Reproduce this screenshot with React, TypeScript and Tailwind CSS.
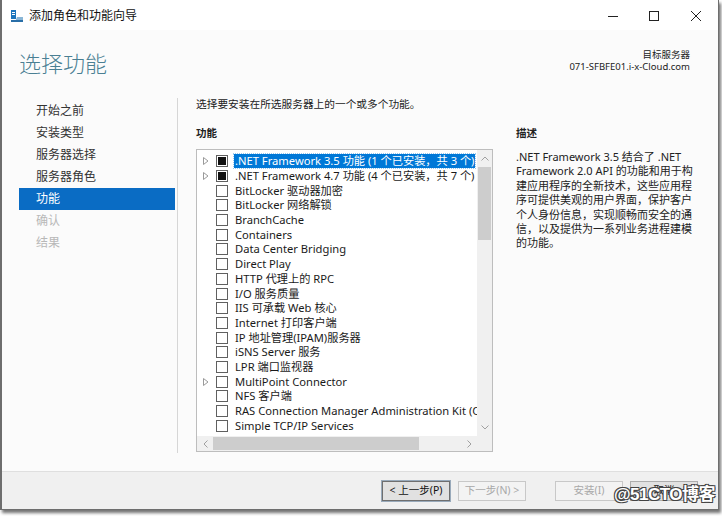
import React from "react";

const items: { text: string; arrow?: boolean; partial?: boolean; selected?: boolean }[] = [
  { text: ".NET Framework 3.5 功能 (1 个已安装，共 3 个)", arrow: true, partial: true, selected: true },
  { text: ".NET Framework 4.7 功能 (4 个已安装，共 7 个)", arrow: true, partial: true },
  { text: "BitLocker 驱动器加密" },
  { text: "BitLocker 网络解锁" },
  { text: "BranchCache" },
  { text: "Containers" },
  { text: "Data Center Bridging" },
  { text: "Direct Play" },
  { text: "HTTP 代理上的 RPC" },
  { text: "I/O 服务质量" },
  { text: "IIS 可承载 Web 核心" },
  { text: "Internet 打印客户端" },
  { text: "IP 地址管理(IPAM)服务器" },
  { text: "iSNS Server 服务" },
  { text: "LPR 端口监视器" },
  { text: "MultiPoint Connector", arrow: true },
  { text: "NFS 客户端" },
  { text: "RAS Connection Manager Administration Kit (CMAK)" },
  { text: "Simple TCP/IP Services" },
];

const nav = [
  { t: "开始之前" },
  { t: "安装类型" },
  { t: "服务器选择" },
  { t: "服务器角色" },
  { t: "功能", sel: true },
  { t: "确认", dis: true },
  { t: "结果", dis: true },
];

const descLines = [
  ".NET Framework 3.5 结合了 .NET",
  "Framework 2.0 API 的功能和用于构",
  "建应用程序的全新技术，这些应用程",
  "序可提供美观的用户界面，保护客户",
  "个人身份信息，实现顺畅而安全的通",
  "信，以及提供为一系列业务进程建模",
  "的功能。",
];

const font = { fontFamily: '"Noto Sans", "Noto Sans CJK SC", sans-serif' };

function Arrow() {
  return (
    <svg width="6" height="8" viewBox="0 0 6 8" className="shrink-0">
      <path d="M0.5 0.5 L5 4 L0.5 7.5 Z" fill="none" stroke="#9a9a9a" strokeWidth="1" />
    </svg>
  );
}

export default function App() {
  return (
    <div className="w-[722px] h-[516px] bg-white relative overflow-hidden" style={font}>
      <div className="w-[719px] h-[510px] bg-[#fbfbfb] border-l-2 border-r border-b border-[#6e6e6e] shadow-[2px_3px_3px_rgba(0,0,0,0.55)] flex flex-col">
        {/* Title bar */}
        <div className="h-[30px] bg-white flex items-center shrink-0 pt-[1px]">
          <svg width="14" height="14" viewBox="0 0 14 14" className="ml-[8px]">
            <rect x="1" y="1" width="5" height="9" fill="#1c75bc" />
            <rect x="2" y="3" width="3" height="1" fill="#fff" />
            <rect x="2" y="5" width="3" height="1" fill="#fff" />
            <path d="M5 13 L7 8 L13 8 L13 13 Z" fill="#8ab6d6" />
            <rect x="1" y="11" width="12" height="2" fill="#2a6fa8" />
          </svg>
          <span className="ml-[5px] text-[12px] text-[#111]">添加角色和功能向导</span>
          <div className="flex-1" />
          <svg width="12" height="12" viewBox="0 0 12 12" className="mr-[29px]">
            <path d="M1 6.5 H11" stroke="#222" strokeWidth="1" />
          </svg>
          <svg width="12" height="12" viewBox="0 0 12 12" className="mr-[30px]">
            <rect x="1.5" y="1.5" width="9" height="9" fill="none" stroke="#222" strokeWidth="1" />
          </svg>
          <svg width="12" height="12" viewBox="0 0 12 12" className="mr-[16px]">
            <path d="M1 1 L11 11 M11 1 L1 11" stroke="#222" strokeWidth="1" />
          </svg>
        </div>

        {/* Header */}
        <div className="h-[66px] flex shrink-0">
          <div className="pl-[17px] pt-[18px] text-[22px] leading-[30px] text-[#4a7f93] font-light">选择功能</div>
          <div className="flex-1" />
          <div className="pr-[28px] pt-[19px] text-right text-[9.5px] leading-[12px] text-[#222]">
            <div>目标服务器</div>
            <div>071-SFBFE01.i-x-Cloud.com</div>
          </div>
        </div>

        {/* Main */}
        <div className="flex flex-1 min-h-0">
          <div className="w-[175px] pt-[4px] shrink-0">
            {nav.map((n) => (
              <div
                key={n.t}
                className={
                  "ml-[17px] w-[156px] h-[22px] leading-[22px] pl-[17px] text-[12px] " +
                  (n.sel ? "bg-[#0a6cc4] text-white" : n.dis ? "text-[#b8b8b8]" : "text-[#333]")
                }
              >
                {n.t}
              </div>
            ))}
          </div>
          <div className="w-px bg-[#d6d6d6] mt-[2px] mb-[18px] shrink-0" />
          <div className="flex-1 pl-[18px] pt-[0px]">
            <div className="text-[10.7px] leading-[16px] text-[#222]">选择要安装在所选服务器上的一个或多个功能。</div>
            <div className="flex mt-[13px]">
              <div className="w-[297px]">
                <div className="text-[10.5px] leading-[16px] font-bold text-[#222]">功能</div>
                <div className="mt-[8px] h-[303px] border border-[#bdbdbd] bg-white flex flex-col">
                  <div className="flex flex-1 min-h-0">
                    <div className="flex-1 overflow-hidden pt-[4px]">
                      {items.map((it, i) => (
                        <div key={i} className="h-[14.7px] flex items-center whitespace-nowrap">
                          <div className="w-[19px] pl-[6px] flex items-center shrink-0">{it.arrow ? <Arrow /> : null}</div>
                          <div className="w-[12px] h-[12px] border border-[#606060] bg-white flex items-center justify-center shrink-0">
                            {it.partial ? <div className="w-[8px] h-[8px] bg-[#111]" /> : null}
                          </div>
                          <span
                            className={
                              "ml-[6px] text-[11.2px] leading-[14px] px-[1px] " +
                              (it.selected ? "bg-[#0078d7] text-white outline outline-1 outline-dotted outline-[#99c9ef]" : "text-[#1a1a1a]")
                            }
                          >
                            {it.text}
                          </span>
                        </div>
                      ))}
                    </div>
                    <div className="w-[15px] bg-[#f0f0f0] flex flex-col shrink-0">
                      <div className="h-[17px] flex items-center justify-center">
                        <svg width="8" height="5" viewBox="0 0 8 5"><path d="M0.5 4.5 L4 1 L7.5 4.5" fill="none" stroke="#a0a0a0" strokeWidth="1" /></svg>
                      </div>
                      <div className="h-[73px] mx-[1px] bg-[#cdcdcd]" />
                      <div className="flex-1" />
                      <div className="h-[17px] flex items-center justify-center">
                        <svg width="8" height="5" viewBox="0 0 8 5"><path d="M0.5 0.5 L4 4 L7.5 0.5" fill="none" stroke="#a0a0a0" strokeWidth="1" /></svg>
                      </div>
                    </div>
                  </div>
                  <div className="h-[15px] flex bg-[#f0f0f0] shrink-0">
                    <div className="w-[16px] flex items-center justify-center">
                      <svg width="5" height="8" viewBox="0 0 5 8"><path d="M4.5 0.5 L1 4 L4.5 7.5" fill="none" stroke="#a0a0a0" strokeWidth="1" /></svg>
                    </div>
                    <div className="w-[206px] my-[1px] bg-[#cdcdcd]" />
                    <div className="flex-1" />
                    <div className="w-[16px] flex items-center justify-center">
                      <svg width="5" height="8" viewBox="0 0 5 8"><path d="M0.5 0.5 L4 4 L0.5 7.5" fill="none" stroke="#a0a0a0" strokeWidth="1" /></svg>
                    </div>
                    <div className="w-[15px] bg-[#f0f0f0]" />
                  </div>
                </div>
              </div>
              <div className="ml-[23px] flex-1">
                <div className="text-[10.5px] leading-[16px] font-bold text-[#222]">描述</div>
                <div className="mt-[9px] text-[11px] leading-[14.4px] text-[#222] whitespace-nowrap">
                  {descLines.map((l, i) => (
                    <div key={i}>{l}</div>
                  ))}
                </div>
              </div>
            </div>
          </div>
        </div>

        {/* Footer */}
        <div className="h-[38px] bg-[#f0f0f0] border-t border-[#dfdfdf] shrink-0 flex items-start pt-[9px]">
          <div className="flex-1" />
          <div className="w-[68px] h-[20px] border border-[#6f6f6f] bg-[#e1e1e1] flex items-center justify-center text-[10.5px] text-[#111] outline outline-1 outline-[#9ab]">
            &lt; 上一步(P)
          </div>
          <div className="ml-[8px] w-[68px] h-[20px] border border-[#c8c8c8] bg-[#f3f3f3] flex items-center justify-center text-[10.5px] text-[#a8a8a8]">
            下一步(N) &gt;
          </div>
          <div className="ml-[29px] w-[68px] h-[20px] border border-[#c8c8c8] bg-[#f3f3f3] flex items-center justify-center text-[10.5px] text-[#a8a8a8]">
            安装(I)
          </div>
          <div className="ml-[7px] mr-[20px] w-[68px] h-[20px] border border-[#adadad] bg-[#e1e1e1] flex items-center justify-center text-[10.5px] text-[#111]">
            取消
          </div>
        </div>
      </div>

      <div
        className="absolute left-[614px] top-[484px] text-[17px] leading-[22px] text-white font-bold tracking-[-0.5px] [text-shadow:_1px_1px_0_#444,_-1px_-1px_0_#444,_1px_-1px_0_#444,_-1px_1px_0_#444]"
        style={{ fontFamily: '"Liberation Sans", "Noto Sans CJK SC", sans-serif' }}
      >
        @51CTO博客
      </div>
    </div>
  );
}
